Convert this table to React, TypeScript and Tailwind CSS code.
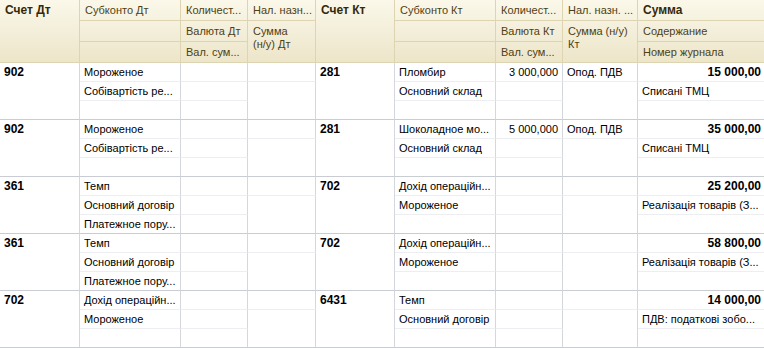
import React from "react";

type G = {
  dt: string;
  sdt: [string, string, string];
  kt: string;
  skt: [string, string, string];
  qty: string;
  nal: string;
  sum: string;
  content: string;
};

const groups: G[] = [
  { dt: "902", sdt: ["Мороженое", "Собівартість ре...", ""], kt: "281", skt: ["Пломбир", "Основний склад", ""], qty: "3 000,000", nal: "Опод. ПДВ", sum: "15 000,00", content: "Списані ТМЦ" },
  { dt: "902", sdt: ["Мороженое", "Собівартість ре...", ""], kt: "281", skt: ["Шоколадное мо...", "Основний склад", ""], qty: "5 000,000", nal: "Опод. ПДВ", sum: "35 000,00", content: "Списані ТМЦ" },
  { dt: "361", sdt: ["Темп", "Основний договір", "Платежное пору..."], kt: "702", skt: ["Дохід операційн...", "Мороженое", ""], qty: "", nal: "", sum: "25 200,00", content: "Реалізація товарів (З..." },
  { dt: "361", sdt: ["Темп", "Основний договір", "Платежное пору..."], kt: "702", skt: ["Дохід операційн...", "Мороженое", ""], qty: "", nal: "", sum: "58 800,00", content: "Реалізація товарів (З..." },
  { dt: "702", sdt: ["Дохід операційн...", "Мороженое", ""], kt: "6431", skt: ["Темп", "Основний договір", ""], qty: "", nal: "", sum: "14 000,00", content: "ПДВ: податкові зобо..." },
];

const cols = "grid grid-cols-[80px_101px_67px_68px_79px_101px_67px_75px_126px]";

const hBase = "overflow-hidden whitespace-nowrap px-[5px] text-[11px] leading-[20px] text-[#4e3f14] border-[#ddd4b2]";
const hBold = "font-bold text-[#35290a]";
const hWrap = "overflow-hidden whitespace-nowrap px-[5px] pt-[4px] text-[11px] leading-[13px] text-[#4e3f14] border-[#ddd4b2]";

const dBase = "overflow-hidden whitespace-nowrap px-[4px] text-[11px] leading-[18px] text-black border-[#d4d8dd]";
const inner = "border-b border-b-[#eceef1]";
const outer = "border-b border-b-[#c9cdd3]";

function Group({ g }: { g: G }) {
  return (
    <div className={cols + " grid-rows-[19px_19px_19px]"}>
      <div className={dBase + " col-start-1 row-start-1 row-span-3 border-r font-bold text-[12px] " + outer}>{g.dt}</div>

      <div className={dBase + " col-start-2 row-start-1 border-r " + inner}>{g.sdt[0]}</div>
      <div className={dBase + " col-start-2 row-start-2 border-r " + inner}>{g.sdt[1]}</div>
      <div className={dBase + " col-start-2 row-start-3 border-r " + outer}>{g.sdt[2]}</div>

      <div className={dBase + " col-start-3 row-start-1 border-r " + inner}></div>
      <div className={dBase + " col-start-3 row-start-2 border-r " + inner}></div>
      <div className={dBase + " col-start-3 row-start-3 border-r " + outer}></div>

      <div className={dBase + " col-start-4 row-start-1 border-r " + inner}></div>
      <div className={dBase + " col-start-4 row-start-2 row-span-2 border-r " + outer}></div>

      <div className={dBase + " col-start-5 row-start-1 row-span-3 border-r font-bold text-[12px] " + outer}>{g.kt}</div>

      <div className={dBase + " col-start-6 row-start-1 border-r " + inner}>{g.skt[0]}</div>
      <div className={dBase + " col-start-6 row-start-2 border-r " + inner}>{g.skt[1]}</div>
      <div className={dBase + " col-start-6 row-start-3 border-r " + outer}>{g.skt[2]}</div>

      <div className={dBase + " col-start-7 row-start-1 border-r text-right " + inner}>{g.qty}</div>
      <div className={dBase + " col-start-7 row-start-2 border-r " + inner}></div>
      <div className={dBase + " col-start-7 row-start-3 border-r " + outer}></div>

      <div className={dBase + " col-start-8 row-start-1 border-r " + inner}>{g.nal}</div>
      <div className={dBase + " col-start-8 row-start-2 row-span-2 border-r " + outer}></div>

      <div className={dBase + " col-start-9 row-start-1 text-right font-bold text-[12px] pr-[3px] " + inner}>{g.sum}</div>
      <div className={dBase + " col-start-9 row-start-2 " + inner}>{g.content}</div>
      <div className={dBase + " col-start-9 row-start-3 " + outer}></div>
    </div>
  );
}

function Header() {
  return (
    <div className={cols + " grid-rows-[21px_21px_21px] bg-gradient-to-b from-[#fbf8ea] to-[#ece5c9]"}>
      <div className={hBase + " " + hBold + " col-start-1 row-start-1 row-span-3 border-r border-b text-[12px]"}>Счет Дт</div>

      <div className={hBase + " col-start-2 row-start-1 border-r border-b"}>Субконто Дт</div>
      <div className={hBase + " col-start-2 row-start-2 border-r border-b"}></div>
      <div className={hBase + " col-start-2 row-start-3 border-r border-b"}></div>

      <div className={hBase + " col-start-3 row-start-1 border-r border-b"}>Количест...</div>
      <div className={hBase + " col-start-3 row-start-2 border-r border-b"}>Валюта Дт</div>
      <div className={hBase + " col-start-3 row-start-3 border-r border-b"}>Вал. сум...</div>

      <div className={hBase + " col-start-4 row-start-1 border-r border-b"}>Нал. назн...</div>
      <div className={hWrap + " col-start-4 row-start-2 row-span-2 border-r border-b"}>
        Сумма
        <br />
        (н/у) Дт
      </div>

      <div className={hBase + " " + hBold + " col-start-5 row-start-1 row-span-3 border-r border-b text-[12px]"}>Счет Кт</div>

      <div className={hBase + " col-start-6 row-start-1 border-r border-b"}>Субконто Кт</div>
      <div className={hBase + " col-start-6 row-start-2 border-r border-b"}></div>
      <div className={hBase + " col-start-6 row-start-3 border-r border-b"}></div>

      <div className={hBase + " col-start-7 row-start-1 border-r border-b"}>Количест...</div>
      <div className={hBase + " col-start-7 row-start-2 border-r border-b"}>Валюта Кт</div>
      <div className={hBase + " col-start-7 row-start-3 border-r border-b"}>Вал. сум...</div>

      <div className={hBase + " col-start-8 row-start-1 border-r border-b"}>Нал. назн. ...</div>
      <div className={hWrap + " col-start-8 row-start-2 row-span-2 border-r border-b"}>
        Сумма (н/у)
        <br />
        Кт
      </div>

      <div className={hBase + " " + hBold + " col-start-9 row-start-1 border-b text-[12px]"}>Сумма</div>
      <div className={hBase + " col-start-9 row-start-2 border-b"}>Содержание</div>
      <div className={hBase + " col-start-9 row-start-3 border-b"}>Номер журнала</div>
    </div>
  );
}

export default function App() {
  return (
    <div className="w-[764px] h-[348px] overflow-hidden bg-white" style={{ fontFamily: '"Liberation Sans", Arial, sans-serif' }}>
      <Header />
      {groups.map((g, i) => (
        <Group key={i} g={g} />
      ))}
    </div>
  );
}
